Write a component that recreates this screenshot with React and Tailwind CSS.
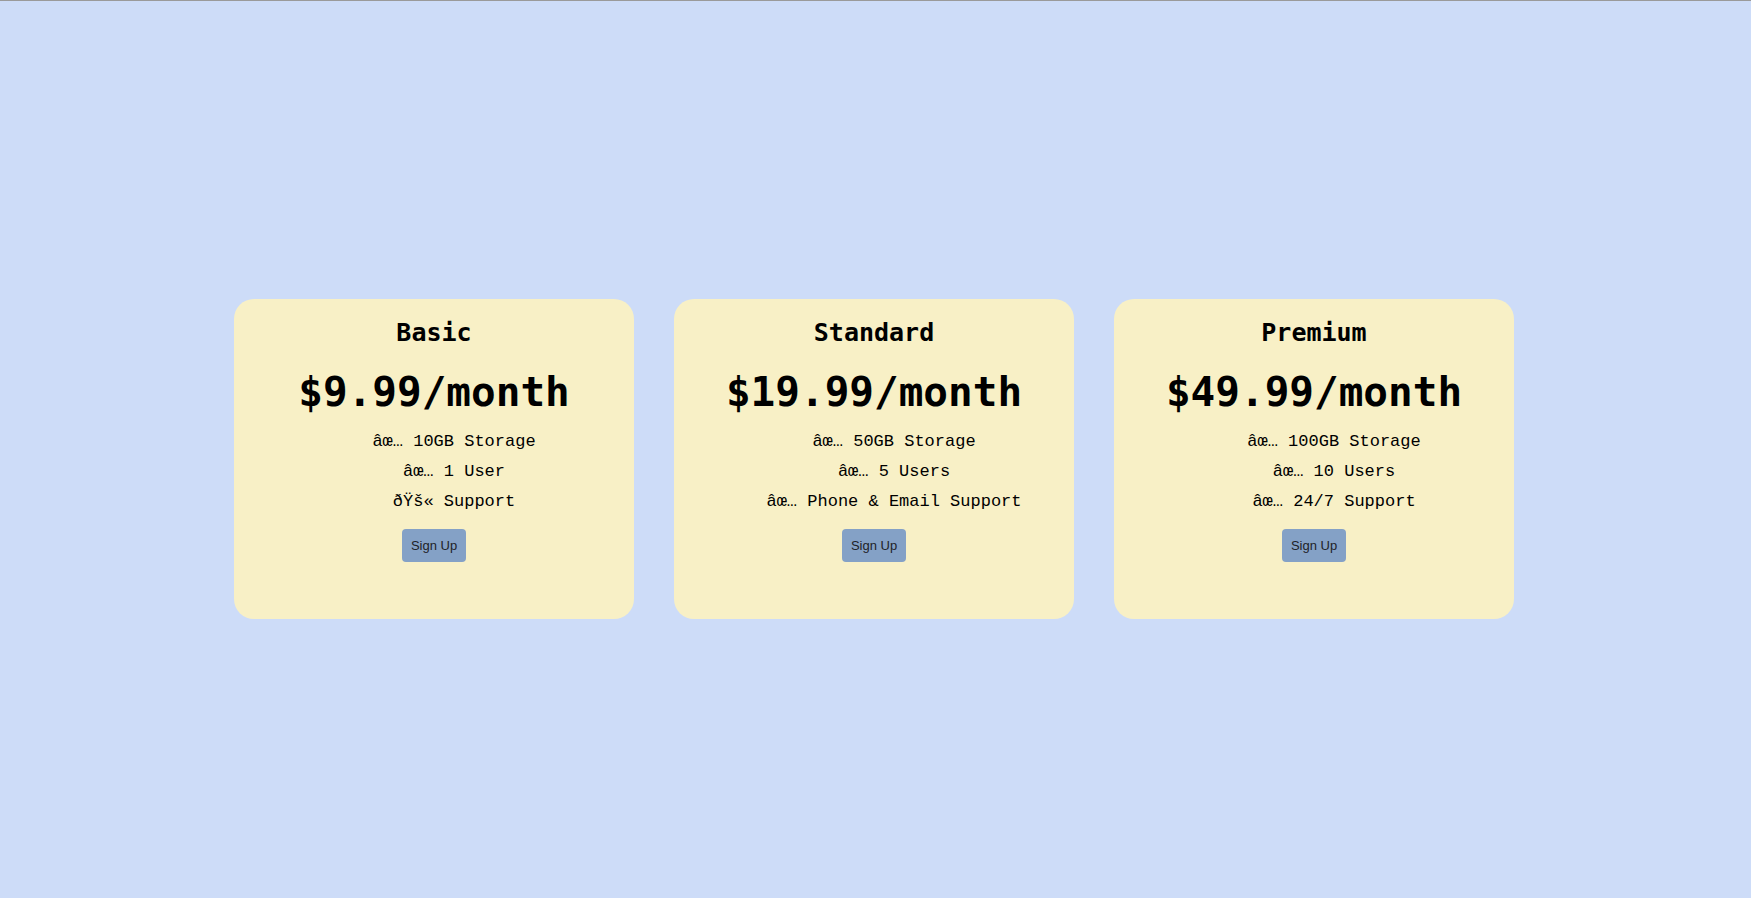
import React from "react";

const CHECK = "\u00E2\u0153\u2026";
const NOPE = "\u00F0\u0178\u0161\u00AB";

const plans = [
  {
    name: "Basic",
    price: "$9.99/month",
    features: [`${CHECK} 10GB Storage`, `${CHECK} 1 User`, `${NOPE} Support`],
  },
  {
    name: "Standard",
    price: "$19.99/month",
    features: [`${CHECK} 50GB Storage`, `${CHECK} 5 Users`, `${CHECK} Phone & Email Support`],
  },
  {
    name: "Premium",
    price: "$49.99/month",
    features: [`${CHECK} 100GB Storage`, `${CHECK} 10 Users`, `${CHECK} 24/7 Support`],
  },
];

const Card = ({ plan }) => {
  return (
    <div className="w-[400px] h-[320px] rounded-[20px] bg-[#f8f0c6] flex flex-col items-center pt-[19px]">
      {/* Plan name */}
      <h2 className="text-[25px] leading-[30px] font-bold font-['DejaVu_Sans_Mono',monospace] text-black">
        {plan.name}
      </h2>

      {/* Price */}
      <div className="mt-[19px] text-[41px] leading-[50px] font-bold font-['DejaVu_Sans_Mono',monospace] text-black">
        {plan.price}
      </div>

      {/* Features */}
      <ul className="mt-[10px] pl-10 text-center text-[17px] leading-[30px] font-['Liberation_Mono',monospace] text-black">
        {plan.features.map((f) => (
          <li key={f} className="whitespace-pre">{f}</li>
        ))}
      </ul>

      <button className="mt-[12px] h-[33px] px-[9px] rounded-[4px] bg-[#84a1c6] text-[13px] text-[#1f2328] font-['Liberation_Sans',Arial,sans-serif]">
        Sign Up
      </button>
    </div>
  );
};

const App = () => {
  return (
    <div className="w-full h-[898px] bg-[#cddcf8] border-t border-[#9a9a9a] flex justify-center items-start pt-[298px] pr-[3px]">
      <div className="flex gap-10">
        {plans.map((p) => (
          <Card key={p.name} plan={p} />
        ))}
      </div>
    </div>
  );
};

export default App;
